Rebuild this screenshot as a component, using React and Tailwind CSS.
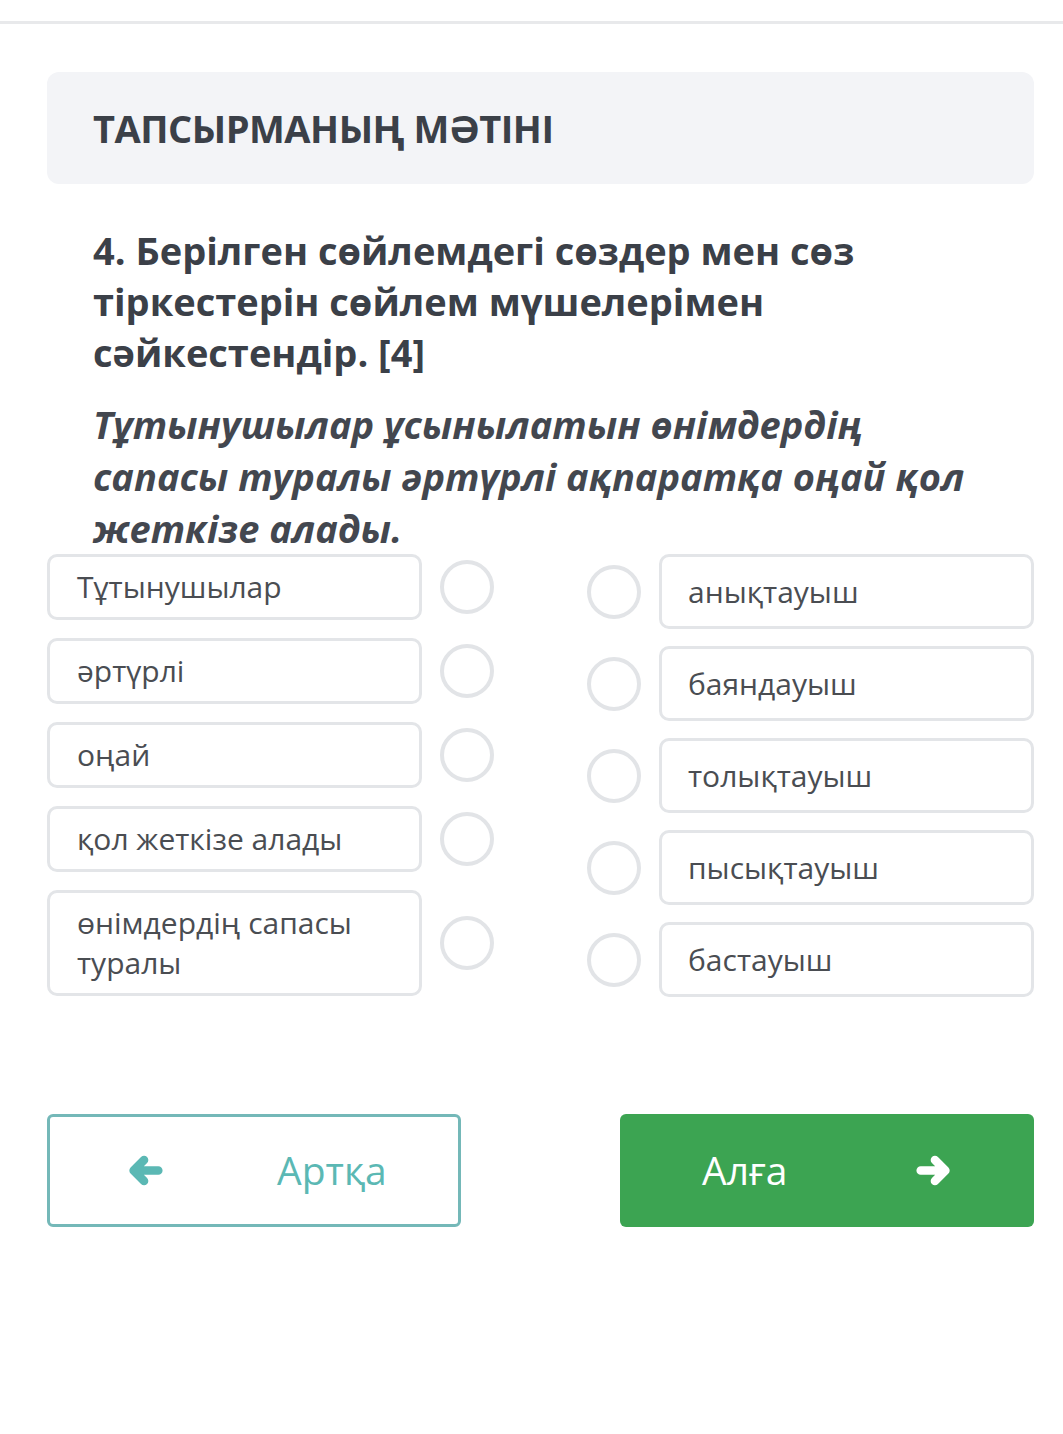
const leftItems = ['Тұтынушылар', 'әртүрлі', 'оңай', 'қол жеткізе алады', 'өнімдердің сапасы туралы']
const rightItems = ['анықтауыш', 'баяндауыш', 'толықтауыш', 'пысықтауыш', 'бастауыш']

function Circle() {
  return <div className="w-[54px] h-[54px] shrink-0 rounded-full border-4 border-[#e2e4e7] bg-white" />
}

// толстая стрелка с круглыми концами
function Arrow({ left }) {
  return (
    <svg viewBox="0 0 40 34" className={'w-[38px] h-[33px] ' + (left ? '' : 'rotate-180')}>
      <path
        d="M34 17 H9 M19 6 L8 17 L19 28"
        fill="none"
        stroke="currentColor"
        strokeWidth="9"
        strokeLinecap="round"
        strokeLinejoin="round"
      />
    </svg>
  )
}

export default function App() {
  return (
    <div className="min-h-[1434px] bg-white font-['Open_Sans',sans-serif] text-[#3b4048]">
      {/* верхняя линия */}
      <div className="h-[24px] border-b-[3px] border-[#e8e9eb]" />

      <div className="pl-[47px] pr-[29px] pt-[48px]">
        {/* заголовок */}
        <div className="h-[112px] rounded-[12px] bg-[#f3f4f7] px-[46px] flex items-center">
          <h1 className="text-[38px] font-bold tracking-[-0.5px] text-[#3b4048]">ТАПСЫРМАНЫҢ МӘТІНІ</h1>
        </div>

        {/* вопрос */}
        <div className="px-[46px] pt-[41px]">
          <p className="text-[38px] font-bold leading-[51px]">
            4. Берілген сөйлемдегі сөздер мен сөз тіркестерін сөйлем мүшелерімен сәйкестендір. [4]
          </p>
          <p className="mt-[20px] text-[38px] font-bold italic leading-[52px] text-[#43474f]">
            Тұтынушылар ұсынылатын өнімдердің сапасы туралы әртүрлі ақпаратқа оңай қол жеткізе алады.
          </p>
        </div>

        {/* сопоставление */}
        <div className="flex justify-between">
          <div className="flex flex-col gap-[18px]">
            {leftItems.map((t) => (
              <div key={t} className="flex items-center gap-[18px]">
                <div className="w-[375px] rounded-[10px] border-[3px] border-[#e3e5e8] px-[27px] py-[10px] text-[30px] leading-[40px] text-[#4a4d52]">
                  {t}
                </div>
                <Circle />
              </div>
            ))}
          </div>
          <div className="flex flex-col gap-[17px]">
            {rightItems.map((t) => (
              <div key={t} className="flex items-center gap-[18px]">
                <Circle />
                <div className="w-[375px] rounded-[10px] border-[3px] border-[#e3e5e8] px-[26px] py-[14px] text-[30px] leading-[41px] text-[#4a4d52]">
                  {t}
                </div>
              </div>
            ))}
          </div>
        </div>

        {/* кнопки */}
        <div className="mt-[117px] flex justify-between">
          <button className="w-[414px] h-[113px] rounded-[6px] border-[3px] border-[#74b8b8] bg-white flex items-center pl-[76px] text-[#5bb8b4]">
            <Arrow left />
            <span className="ml-[113px] text-[39px]">Артқа</span>
          </button>
          <button className="w-[414px] h-[113px] rounded-[6px] bg-[#3ca452] flex items-center pl-[82px] text-white">
            <span className="text-[39px]">Алға</span>
            <span className="ml-[128px]"><Arrow /></span>
          </button>
        </div>
      </div>
    </div>
  )
}
